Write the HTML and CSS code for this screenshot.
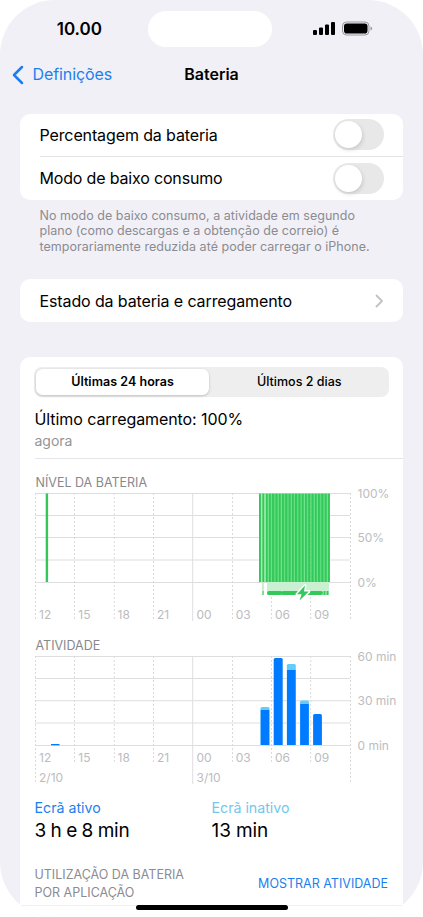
FILE: index.html
```html
<!DOCTYPE html>
<html lang="pt">
<head>
<meta charset="utf-8">
<title>Bateria</title>
<link rel="stylesheet" href="styles.css">
</head>
<body>
<main class="screen">
  <header class="status">
    <span class="time">10.00</span>
    <span class="island"></span>
    <svg class="indicators" width="60" height="16" viewBox="0 0 60 16">
      <rect x="0" y="9" width="4" height="5" rx="1.1"/>
      <rect x="6" y="6.500" width="4" height="7.500" rx="1.1"/>
      <rect x="12" y="3.500" width="4" height="10.500" rx="1.1"/>
      <rect x="18" y="1" width="4" height="13" rx="1.1"/>
      <rect x="29.500" y="1" width="26.500" height="13" rx="4" fill="none" stroke="#98989c"/>
      <rect x="31" y="2.500" width="23.500" height="10" rx="2.800"/>
      <path d="M57.500 5.500Q59.200 6.200 59.200 7.500T57.500 9.500Z" fill="#98989c"/>
    </svg>
  </header>
  <nav class="nav">
    <a class="back"><svg width="12" height="20" viewBox="0 0 12 20"><path d="M10 2L2 10l8 8"/></svg><span>Definições</span></a>
    <h1>Bateria</h1>
  </nav>

  <section class="card toggles">
    <div class="row"><span class="label l1">Percentagem da bateria</span><span class="switch"></span></div>
    <div class="row"><span class="label l2">Modo de baixo consumo</span><span class="switch"></span></div>
  </section>
  <p class="note">No modo de baixo consumo, a atividade em segundo<br>plano (como descargas e a obtenção de correio) é<br>temporariamente reduzida até poder carregar o iPhone.</p>

  <section class="card link">
    <span class="label l3">Estado da bateria e carregamento</span>
    <svg width="9" height="14" viewBox="0 0 9 14"><path d="M1.500 1.500L7 7l-5.500 5.500"/></svg>
  </section>

  <section class="card usage">
    <div class="segmented"><span class="segment selected">Últimas 24 horas</span><span class="segment">Últimos 2 dias</span></div>
    <h2>Último carregamento: 100%</h2>
    <p class="ago">agora</p>
    <hr>
    <svg class="chart" width="383" height="158" viewBox="20 470 383 158">
      <defs>
        <pattern id="levels" x="259" y="493" width="3.280" height="90" patternUnits="userSpaceOnUse">
          <rect width="3.280" height="90" fill="#6ee58c"/><rect width="2.150" height="90" fill="#34c759"/>
        </pattern>
      </defs>
      <text class="title" x="35.500" y="486.500">NÍVEL DA BATERIA</text>
      <path class="grid" d="M35 493.500H350M35 515.500H350M35 537.500H350M35 560H350M35 582.500H350M192.700 493V621"/>
      <path class="dash" d="M35.500 493V621M74.500 493V621M114.300 493V621M153.500 493V621M232.500 493V621M271.500 493V621M310.700 493V621M350.500 493V621"/>
      <rect x="45.700" y="493.500" width="2.400" height="88.500" fill="#34c759"/>
      <rect x="259" y="493.500" width="71" height="88.500" fill="url(#levels)"/>
      <path d="M261.200 493.500h1v88.500h-1zM264.500 493.500h1v88.500h-1z" fill="#c5f3cf"/>
      <path d="M271.500 494V582M310.700 494V582" stroke="#7dd993" stroke-width=".6" stroke-dasharray="2 2"/>
      <path d="M262 582h2v13h-2zM267 582h62v13h-62z" fill="#caf0d2"/>
      <path d="M262.500 591h1v4h-1z" fill="#34c759"/>
      <path d="M269 593h11M283.500 593H321" stroke="#34c759" stroke-width="4" stroke-linecap="round"/>
      <path d="M280 593h3" stroke="#34c759" stroke-width="3"/>
      <path d="M324.500 591v4M327.500 591v4" stroke="#34c759" stroke-width="2"/>
      <path d="M305 585.500L297 594.300h4.600l-2.100 6.200 9.300-8.900h-4.800z" fill="#34c759" stroke="#fff" stroke-width="3" stroke-linejoin="round" paint-order="stroke"/>
      <g class="hours" transform="translate(0 618.500)">
        <text x="39">12</text><text x="78.300">15</text><text x="117.500">18</text><text x="157">21</text><text x="196.500">00</text><text x="235.700">03</text><text x="275">06</text><text x="314.300">09</text>
      </g>
      <g class="scale"><text x="357.500" y="498">100%</text><text x="357.500" y="542">50%</text><text x="357.500" y="586.500">0%</text></g>
    </svg>
    <svg class="chart" width="383" height="160" viewBox="20 628 383 160">
      <text class="title activity" x="35.500" y="649.500">ATIVIDADE</text>
      <path class="grid" d="M35 656.500H350M35 678.500H350M35 700.700H350M35 723H350M35 745.500H350M192.700 656V784"/>
      <path class="dash" d="M35.500 656V784M74.500 656V763M114.300 656V763M153.500 656V763M232.500 656V763M271.500 656V763M310.700 656V763M350.500 656V784"/>
      <g fill="#64cbfb">
        <path d="M260.500 745v-36.500q0-1.500 1.500-1.500h6q1.500 0 1.500 1.500V745z"/>
        <path d="M286.800 745v-79.500q0-1.500 1.500-1.500h6q1.500 0 1.500 1.500V745z"/>
        <path d="M300 745v-43q0-1.500 1.500-1.500h6q1.500 0 1.500 1.500V745z"/>
      </g>
      <g fill="#007aff">
        <rect x="51" y="744" width="8.500" height="1.300"/>
        <rect x="260.700" y="710" width="8.600" height="35"/>
        <path d="M273.700 745v-85.500q0-1.500 1.500-1.500h6q1.500 0 1.500 1.500V745z"/>
        <rect x="287" y="670" width="8.600" height="75"/>
        <rect x="300.200" y="704" width="8.600" height="41"/>
        <path d="M313.100 745v-29.500q0-1.500 1.500-1.500h5.800q1.500 0 1.500 1.500V745z"/>
      </g>
      <g class="hours" transform="translate(0 761.500)">
        <text x="39">12</text><text x="78.300">15</text><text x="117.500">18</text><text x="157">21</text><text x="196.500">00</text><text x="235.700">03</text><text x="275">06</text><text x="314.300">09</text>
        <text x="39" y="20.300">2/10</text><text x="196.500" y="20.300">3/10</text>
      </g>
      <g class="scale"><text x="357.500" y="661">60 min</text><text x="357.500" y="705">30 min</text><text x="357.500" y="749.500">0 min</text></g>
    </svg>
    <div class="totals">
      <div><span class="kind active">Ecrã ativo</span><strong class="duration d1">3 h e 8 min</strong></div>
      <div><span class="kind idle">Ecrã inativo</span><strong class="duration">13 min</strong></div>
    </div>
    <footer><span>UTILIZAÇÃO DA BATERIA<br>POR APLICAÇÃO</span><a>MOSTRAR ATIVIDADE</a></footer>
    <div class="home"><span></span></div>
  </section>
</main>
</body>
</html>
```

FILE: styles.css
```css
* { box-sizing: border-box; }
body { margin: 0; background: #fff; color: #000; font-family: Inter, "Liberation Sans", sans-serif; }
h1, h2, p { margin: 0; font-weight: 400; }
.screen { width: 423px; height: 917px; overflow: hidden; border-radius: 55px; background: #f1f0f6; }
.status { height: 56px; display: grid; grid-template-columns: 148px 124px 1fr; padding-top: 11px; }
.time { justify-self: end; margin-right: 46px; font-size: 17px; line-height: 36px; font-weight: 600; letter-spacing: 0; }
.island { height: 36px; border-radius: 18px; background: #fff; }
.indicators { margin: 10px 0 0 41px; }
.nav { height: 57.500px; display: grid; grid-template-columns: 1fr auto 1fr; line-height: 37px; }
.back { display: flex; align-items: center; gap: 8.500px; height: 37px; padding-left: 12px; color: #1c7fed; font-size: 16px; letter-spacing: -.1px; }
.back svg { fill: none; stroke: #1c7fed; stroke-width: 2.500; stroke-linecap: round; stroke-linejoin: round; }
h1 { font-size: 16px; font-weight: 600; letter-spacing: 0; }
.card { margin: 0 20px; border-radius: 10px; background: #fff; }
.row { display: flex; align-items: center; justify-content: space-between; height: 43.200px; margin-left: 19.500px; padding-right: 19px; }
.row + .row { border-top: 1px solid #e4e4e6; }
.row:first-child { height: 42.900px; }
.label { font-size: 16px; letter-spacing: -.12px; }
.l2 { letter-spacing: -.17px; }
.switch { width: 51px; height: 31px; padding: 2px; border-radius: 16px; background: #e8e8e9; }
.switch::before { content: ""; display: block; width: 27px; height: 27px; border-radius: 50%; background: #fff; box-shadow: 1px 2px 4px #0002; }
.note { height: 79.300px; padding: 8px 0 0 39.500px; color: #8b8b91; font-size: 12.500px; line-height: 15.700px; letter-spacing: .03px; white-space: nowrap; }
.link { height: 43.500px; display: flex; align-items: center; justify-content: space-between; padding: 0 19px 0 19.500px; }
.link svg { fill: none; stroke: #c2c2c5; stroke-width: 1.800; stroke-linecap: round; stroke-linejoin: round; }
.usage { height: 570px; margin-top: 34.600px; padding-top: 10.500px; }
.segmented { display: grid; grid-template-columns: 173px 1fr; height: 29.500px; margin: 0 14.500px 0 14px; padding: 2px; border-radius: 8px; background: #eee; }
.segment { padding-left: 3px; font-size: 12.500px; font-weight: 500; line-height: 26px; text-align: center; }
.selected { padding-left: 0; border-radius: 6.500px; background: #fff; font-weight: 600; letter-spacing: .04px; box-shadow: 0 1px 3px #0003; }
h2 { margin: 11.400px 15px 0 14.500px; font-size: 16px; line-height: 23px; letter-spacing: -.08px; }
.ago { margin: 0 14.500px; color: #949498; font-size: 14px; line-height: 19px; }
hr { margin: 8px 0 0 15px; border: 0; border-top: 1px solid #e4e4e6; }
.chart { display: block; }
.usage hr + .chart { margin-top: 11px; }
.title { fill: #88888c; font-size: 12.500px; }
.hours { fill: #bcbcc0; font-size: 12px; }
.scale { fill: #bcbcc0; font-size: 12px; }
.grid { fill: none; stroke: #dedee0; }
.dash { fill: none; stroke: #dadadc; stroke-dasharray: 2 2; }
.totals { display: grid; grid-template-columns: 177px 1fr; height: 76px; padding: 11px 14.500px 0; }
.kind { display: block; font-size: 14.200px; line-height: 18px; }
.active { color: #1c7fed; }
.idle { color: #72c8eb; }
.duration { display: block; font-size: 19px; font-weight: 400; line-height: 28px; letter-spacing: -.1px; }
.d1 { letter-spacing: -.2px; word-spacing: -.6px; }
footer { display: flex; justify-content: space-between; height: 40.500px; padding: 2px 15px 0 14.500px; color: #8b8b91; font-size: 12.500px; line-height: 18px; }
footer a { margin-top: 9px; color: #1c7fed; }
.home { display: flex; justify-content: center; border-top: 1px solid #f1f1f2; }
.home span { width: 152px; height: 5px; margin-top: -1px; border-radius: 3px; background: #000; }
```
